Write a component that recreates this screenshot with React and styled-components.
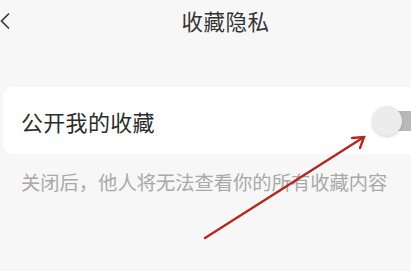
import React, { useState } from 'react';
import styled, { createGlobalStyle } from 'styled-components';

const GlobalStyle = createGlobalStyle`
  html, body {
    margin: 0;
    padding: 0;
    background: #f7f7f7;
    font-family: "Noto Sans CJK SC", "Noto Sans", sans-serif;
    overflow: hidden;
  }
`;

const Page = styled.div`
  position: relative;
  width: 411px;
  height: 271px;
  overflow: hidden;
  background: #f7f7f7;
`;

const Header = styled.div`
  position: relative;
  display: flex;
  align-items: center;
  justify-content: center;
  height: 40px;
`;

const BackButton = styled.button`
  position: absolute;
  left: 0;
  top: 12px;
  width: 14px;
  height: 18px;
  padding: 0;
  border: none;
  background: none;
  display: flex;
  align-items: center;
`;

const Title = styled.h1`
  margin: 0;
  padding-left: 40px;
  font-size: 21.5px;
  font-weight: 400;
  color: #333;
  letter-spacing: 0.5px;
`;

const Card = styled.div`
  display: flex;
  align-items: center;
  justify-content: space-between;
  height: 67px;
  margin: 47px -24px 0 3px;
  padding: 0 0 0 18px;
  background: #fff;
  border-radius: 10px;
`;

const Label = styled.span`
  font-size: 22px;
  color: #2b2b2b;
  letter-spacing: 0.3px;
`;

const Track = styled.button`
  position: relative;
  width: 50px;
  height: 20px;
  padding: 0;
  border: none;
  border-radius: 10px;
  background: ${(p) => (p.on ? '#e33' : '#b8b8b8')};
  cursor: pointer;
`;

const Knob = styled.span`
  position: absolute;
  top: -5px;
  left: ${(p) => (p.on ? '22px' : '-13px')};
  width: 30px;
  height: 30px;
  border-radius: 50%;
  background: #ececec;
  box-shadow: 0 1px 3px rgba(0, 0, 0, 0.18);
`;

const Hint = styled.p`
  margin: 14px 0 0 21px;
  font-size: 19.3px;
  color: #a9a9a9;
  white-space: nowrap;
`;

const Annotation = styled.svg`
  position: absolute;
  left: 0;
  top: 0;
  pointer-events: none;
`;

const App = () => {
  const [on, setOn] = useState(false);

  return (
    <Page>
      <GlobalStyle />
      <Header>
        <BackButton aria-label="返回">
          <svg width="12" height="18" viewBox="0 0 12 18">
            <path d="M9 1.5 L1.5 9 L9 16.5" fill="none" stroke="#333" strokeWidth="1.6" />
          </svg>
        </BackButton>
        <Title>收藏隐私</Title>
      </Header>
      <Card>
        <Label>公开我的收藏</Label>
        <Track on={on} onClick={() => setOn(!on)}>
          <Knob on={on} />
        </Track>
      </Card>
      <Hint>关闭后，他人将无法查看你的所有收藏内容</Hint>
      <Annotation width="411" height="271" viewBox="0 0 411 271">
        <g stroke="#b5281e" strokeWidth="2.4" strokeLinecap="round" fill="none">
          <path d="M205 238 L364 137" />
          <path d="M352 138 L364 137 L360 148" />
        </g>
      </Annotation>
    </Page>
  );
};

export default App;
